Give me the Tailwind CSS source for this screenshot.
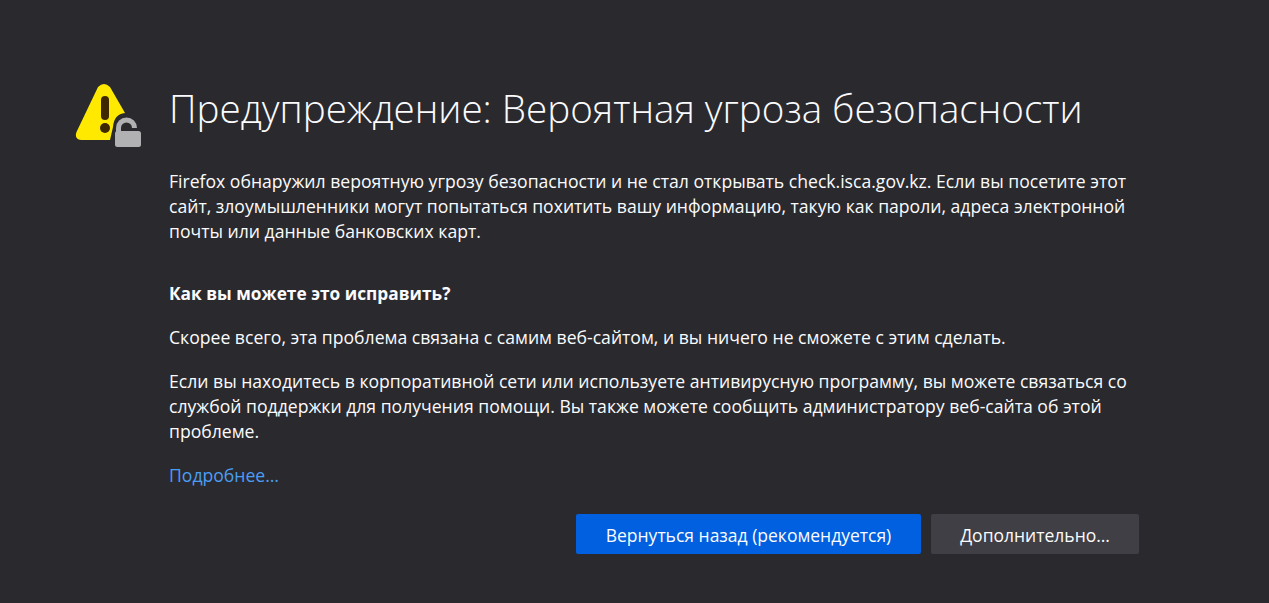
<!DOCTYPE html>
<html lang="ru">
<head>
    <meta charset="UTF-8">
    <title>Предупреждение: Вероятная угроза безопасности</title>
    <script src="https://cdn.jsdelivr.net/npm/@tailwindcss/browser@4"></script>
</head>
<body class="bg-[#2a2a2e] text-[#fbfbfe] font-['Open_Sans',sans-serif] h-[603px] overflow-hidden">
    <div class="flex pl-[75px] pt-[83px]">
        <!-- warning icon with lock -->
        <svg class="w-[66px] h-[66px] shrink-0" viewBox="0 0 66 66">
            <path d="M23 4 Q29 -2 35 4 L50 30 Q39 31 38 44 L35 57 L6 57 Q-1 56 1.500 49 Z" fill="#ffe900"/>
            <rect x="26" y="13" width="8" height="24" rx="4" fill="#3e2800"/>
            <circle cx="30" cy="45" r="5" fill="#3e2800"/>
            <path d="M43.500 49 V45 A8 8 0 0 1 59.500 45" fill="none" stroke="#b1b1b3" stroke-width="5"/>
            <rect x="40" y="48" width="26" height="16" rx="2.500" fill="#b1b1b3"/>
        </svg>
        <div class="ml-[28px] w-[970px]">
            <h1 class="text-[38.6px] leading-[50px] font-light whitespace-nowrap">Предупреждение: Вероятная угроза безопасности</h1>
            <p class="mt-[36px] text-[17.6px] leading-[25px] whitespace-nowrap">Firefox обнаружил вероятную угрозу безопасности и не стал открывать check.isca.gov.kz. Если вы посетите этот<br>сайт, злоумышленники могут попытаться похитить вашу информацию, такую как пароли, адреса электронной<br>почты или данные банковских карт.</p>
            <h2 class="mt-[37px] text-[17.3px] leading-[25px] font-bold">Как вы можете это исправить?</h2>
            <p class="mt-[19px] text-[17.6px] leading-[25px] whitespace-nowrap">Скорее всего, эта проблема связана с самим веб-сайтом, и вы ничего не сможете с этим сделать.</p>
            <p class="mt-[19px] text-[17.6px] leading-[25px] whitespace-nowrap">Если вы находитесь в корпоративной сети или используете антивирусную программу, вы можете связаться со<br>службой поддержки для получения помощи. Вы также можете сообщить администратору веб-сайта об этой<br>проблеме.</p>
            <a href="#" class="block mt-[19px] text-[17.6px] leading-[25px] text-[#4a9df5]">Подробнее…</a>
            <div class="flex justify-end gap-[10px] mt-[26px]">
                <button class="h-[40px] w-[345px] pt-[2px] rounded-[2px] bg-[#0060df] text-[17.5px] text-[#fbfbfe]">Вернуться назад (рекомендуется)</button>
                <button class="h-[40px] w-[208px] pt-[2px] rounded-[2px] bg-[#403f45] text-[17.5px] text-[#fbfbfe]">Дополнительно…</button>
            </div>
        </div>
    </div>
</body>
</html>
